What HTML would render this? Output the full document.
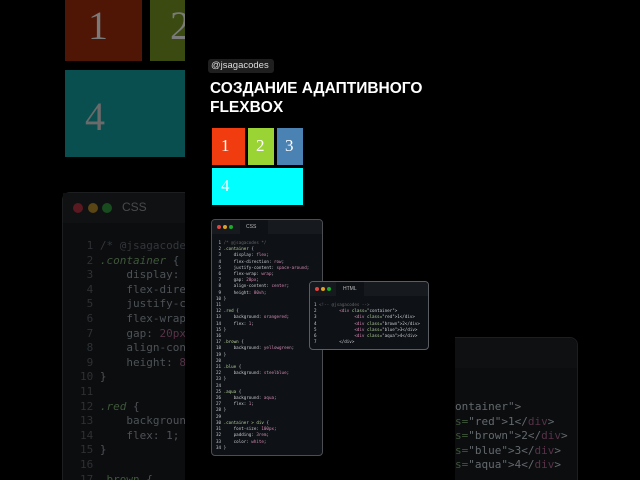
<!DOCTYPE html>
<html style="width:640px;height:480px;overflow:hidden"><head><meta charset="utf-8"><style>
*{margin:0;padding:0;box-sizing:border-box}
body{width:640px;height:480px;background:#000;position:relative;overflow:hidden;font-family:"Liberation Sans",sans-serif}
.a{position:absolute}
.num{font-family:"Liberation Serif",serif;color:#fff}
.mono{font-family:"DejaVu Sans Mono","Liberation Mono",monospace;white-space:pre}
.dot{position:absolute;border-radius:50%}
</style></head><body>
<!-- left dim -->
<div class="a" style="left:65px;top:0;width:77px;height:61px;background:#4f1505"></div>
<div class="a num" style="left:88px;top:2px;font-size:40px;color:#7a7a7a">1</div>
<div class="a" style="left:150px;top:0;width:35px;height:61px;background:#3a4a10"></div>
<div class="a num" style="left:170px;top:2px;font-size:40px;color:#7a7a7a">2</div>
<div class="a" style="left:65px;top:70px;width:120px;height:87px;background:#0a4f4f"></div>
<div class="a num" style="left:85px;top:93px;font-size:40px;color:#6a6a6a">4</div>
<div class="a" style="left:62px;top:192px;width:140px;height:300px;background:#0b0d0f;border:1px solid #1c1e20;border-radius:8px"></div>
<div class="a" style="left:63px;top:193px;width:122px;height:30px;background:#0f1113"></div>
<div class="dot" style="left:73px;top:203px;width:10px;height:10px;background:#5a1820"></div>
<div class="dot" style="left:88px;top:203px;width:10px;height:10px;background:#5a4614"></div>
<div class="dot" style="left:102px;top:203px;width:10px;height:10px;background:#184c1f"></div>
<div class="a" style="left:122px;top:200px;font-size:12px;color:#4a4a4a">CSS</div>
<div class="a mono" style="left:80px;top:239px;font-size:11px;line-height:14.6px;color:#4e5256"><span style="color:#2e3134"> 1</span> <span style="color:#33363a">/* @jsagacodes */</span>
<span style="color:#2e3134"> 2</span> <span style="color:#3f573a;font-style:italic">.container</span> {
<span style="color:#2e3134"> 3</span>     display: flex;
<span style="color:#2e3134"> 4</span>     flex-direction: row;
<span style="color:#2e3134"> 5</span>     justify-content: space;
<span style="color:#2e3134"> 6</span>     flex-wrap: wrap;
<span style="color:#2e3134"> 7</span>     gap: <span style="color:#573248">20px</span>;
<span style="color:#2e3134"> 8</span>     align-content: center;
<span style="color:#2e3134"> 9</span>     height: <span style="color:#573248">80vh</span>;
<span style="color:#2e3134">10</span> }
<span style="color:#2e3134">11</span>
<span style="color:#2e3134">12</span> <span style="color:#3f573a;font-style:italic">.red</span> {
<span style="color:#2e3134">13</span>     background: orangered;
<span style="color:#2e3134">14</span>     flex: 1;
<span style="color:#2e3134">15</span> }
<span style="color:#2e3134">16</span>
<span style="color:#2e3134">17</span> <span style="color:#3f573a">.brown</span> {</div>
<!-- right dim -->
<div class="a" style="left:440px;top:337px;width:138px;height:160px;background:#0b0d0f;border:1px solid #1c1e20;border-radius:8px"></div>
<div class="a" style="left:441px;top:338px;width:136px;height:30px;background:#0e1012;border-radius:8px 8px 0 0"></div>
<div class="a mono" style="left:455px;top:400px;font-size:11px;line-height:14.6px;color:#64696e;width:122px;overflow:hidden"><span>ontainer"&gt;</span>
<span style="color:#3f573a">s=</span><span>"red"&gt;1&lt;/<span style="color:#573248">div</span>&gt;</span>
<span style="color:#3f573a">s=</span><span>"brown"&gt;2&lt;/<span style="color:#573248">div</span>&gt;</span>
<span style="color:#3f573a">s=</span><span>"blue"&gt;3&lt;/<span style="color:#573248">div</span>&gt;</span>
<span style="color:#3f573a">s=</span><span>"aqua"&gt;4&lt;/<span style="color:#573248">div</span>&gt;</span></div>
<div class="a" style="left:185px;top:0;width:270px;height:480px;background:#000"></div>
<!-- center -->
<div class="a" style="left:208px;top:59px;width:66px;height:14px;background:#1f1f1f;border-radius:3px;color:#ddd;font-size:9.5px;line-height:14px;padding-left:3px">@jsagacodes</div>
<div class="a" style="left:210px;top:79px;color:#fff;font-weight:bold;font-size:15.5px;line-height:19px;white-space:nowrap">СОЗДАНИЕ АДАПТИВНОГО<br>FLEXBOX</div>
<div class="a" style="left:212px;top:128px;width:33px;height:37px;background:#f03c0f"></div>
<div class="a num" style="left:221px;top:136px;font-size:17px">1</div>
<div class="a" style="left:248px;top:128px;width:26px;height:37px;background:#9ad434"></div>
<div class="a num" style="left:256px;top:136px;font-size:17px">2</div>
<div class="a" style="left:277px;top:128px;width:26px;height:37px;background:#4a82b4"></div>
<div class="a num" style="left:285px;top:136px;font-size:17px">3</div>
<div class="a" style="left:212px;top:168px;width:91px;height:37px;background:#00ffff"></div>
<div class="a num" style="left:221px;top:176px;font-size:17px">4</div>
<!-- css window -->
<div class="a" style="left:211px;top:219px;width:112px;height:237px;background:#0e1116;border:1px solid #4a4d52;border-radius:4px;overflow:hidden">
 <div style="height:14px;background:#16191e"></div>
 <div class="a" style="left:28px;top:0;width:28px;height:14px;background:#0e1116"></div>
 <div class="a" style="left:34px;top:4px;font-size:5px;color:#bbb">CSS</div>
 <div class="dot" style="left:5px;top:5px;width:4px;height:4px;background:#e0443e"></div>
 <div class="dot" style="left:11px;top:5px;width:4px;height:4px;background:#dea123"></div>
 <div class="dot" style="left:17px;top:5px;width:4px;height:4px;background:#1aab29"></div>
 <div class="a mono" style="left:4px;top:20px;font-size:4.2px;line-height:6.2px;color:#c9ccd0"> 1 <span style="color:#666">/* @jsagacodes */</span>
 2 <span style="color:#b5d39a">.container</span> {
 3     display: <span style="color:#d58ab4">flex</span>;
 4     flex-direction: <span style="color:#d58ab4">row</span>;
 5     justify-content: <span style="color:#d58ab4">space-around</span>;
 6     flex-wrap: <span style="color:#d58ab4">wrap</span>;
 7     gap: <span style="color:#d58ab4">20px</span>;
 8     align-content: <span style="color:#d58ab4">center</span>;
 9     height: <span style="color:#d58ab4">80vh</span>;
10 }
11
12 <span style="color:#b5d39a">.red</span> {
13     background: <span style="color:#d58ab4">orangered</span>;
14     flex: <span style="color:#d58ab4">1</span>;
15 }
16
17 <span style="color:#b5d39a">.brown</span> {
18     background: <span style="color:#d58ab4">yellowgreen</span>;
19 }
20
21 <span style="color:#b5d39a">.blue</span> {
22     background: <span style="color:#d58ab4">steelblue</span>;
23 }
24
25 <span style="color:#b5d39a">.aqua</span> {
26     background: <span style="color:#d58ab4">aqua</span>;
27     flex: <span style="color:#d58ab4">1</span>;
28 }
29
30 <span style="color:#b5d39a">.container &gt; div</span> {
31     font-size: <span style="color:#d58ab4">100px</span>;
32     padding: <span style="color:#d58ab4">3rem</span>;
33     color: <span style="color:#d58ab4">white</span>;
34 }</div>
</div>
<!-- html window -->
<div class="a" style="left:309px;top:281px;width:120px;height:69px;background:#0e1116;border:1px solid #5a5d62;border-radius:4px;overflow:hidden">
 <div style="height:14px;background:#16191e"></div>
 <div class="a" style="left:26px;top:0;width:28px;height:14px;background:#0e1116"></div>
 <div class="a" style="left:33px;top:4px;font-size:5px;color:#bbb">HTML</div>
 <div class="dot" style="left:5px;top:5px;width:4px;height:4px;background:#e0443e"></div>
 <div class="dot" style="left:11px;top:5px;width:4px;height:4px;background:#dea123"></div>
 <div class="dot" style="left:17px;top:5px;width:4px;height:4px;background:#1aab29"></div>
 <div class="a mono" style="left:4px;top:20px;font-size:4.2px;line-height:6.2px;color:#c9ccd0">1 <span style="color:#666">&lt;!-- @jsagacodes --&gt;</span>
2         <span style="color:#d58ab4">&lt;div</span> <span style="color:#b5d39a">class=</span>"container"&gt;
3               <span style="color:#d58ab4">&lt;div</span> <span style="color:#b5d39a">class=</span>"red"&gt;1&lt;/div&gt;
4               <span style="color:#d58ab4">&lt;div</span> <span style="color:#b5d39a">class=</span>"brown"&gt;2&lt;/div&gt;
5               <span style="color:#d58ab4">&lt;div</span> <span style="color:#b5d39a">class=</span>"blue"&gt;3&lt;/div&gt;
6               <span style="color:#d58ab4">&lt;div</span> <span style="color:#b5d39a">class=</span>"aqua"&gt;4&lt;/div&gt;
7         &lt;/div&gt;</div>
</div>
</body></html>
